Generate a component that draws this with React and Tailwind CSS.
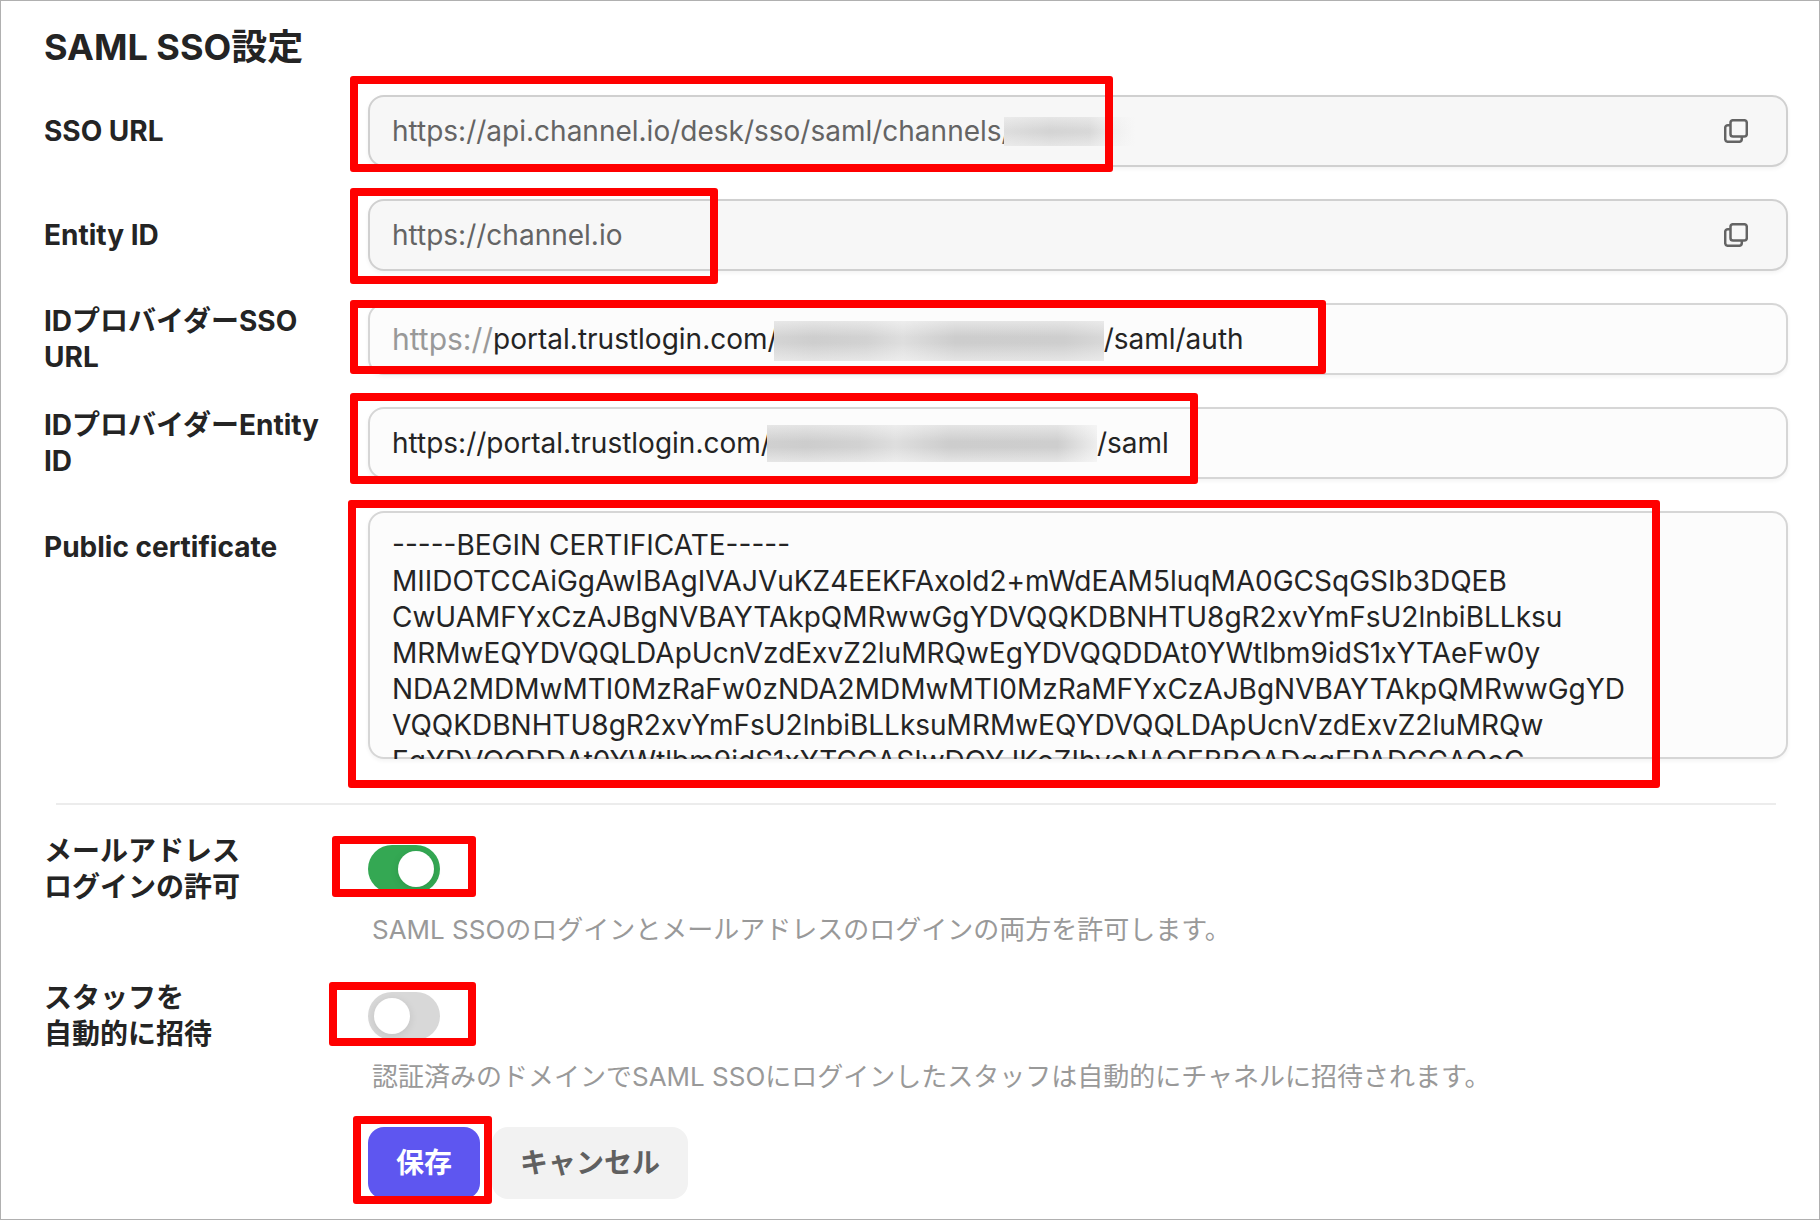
import { useState } from 'react'
import clsx from 'clsx'

const CERTIFICATE = [
  '-----BEGIN CERTIFICATE-----',
  'MIIDOTCCAiGgAwIBAgIVAJVuKZ4EEKFAxold2+mWdEAM5luqMA0GCSqGSIb3DQEB',
  'CwUAMFYxCzAJBgNVBAYTAkpQMRwwGgYDVQQKDBNHTU8gR2xvYmFsU2lnbiBLLksu',
  'MRMwEQYDVQQLDApUcnVzdExvZ2luMRQwEgYDVQQDDAt0YWtlbm9idS1xYTAeFw0y',
  'NDA2MDMwMTI0MzRaFw0zNDA2MDMwMTI0MzRaMFYxCzAJBgNVBAYTAkpQMRwwGgYD',
  'VQQKDBNHTU8gR2xvYmFsU2lnbiBLLksuMRMwEQYDVQQLDApUcnVzdExvZ2luMRQw',
  'EgYDVQQDDAt0YWtlbm9idS1xYTCCASIwDQYJKoZIhvcNAQEBBQADggEPADCCAQoC',
].join('\n')

export default function App() {
  const [idpUrl, setIdpUrl] = useState('portal.trustlogin.com/')
  const [idpEntity, setIdpEntity] = useState('https://portal.trustlogin.com/')
  const [certificate, setCertificate] = useState(CERTIFICATE)
  const [allowEmail, setAllowEmail] = useState(true)
  const [autoInvite, setAutoInvite] = useState(false)

  return (
    <main
      lang="ja"
      className="border border-[#b0b0b0] bg-white pl-[43px] pr-[31px] pt-[22px] pb-5 font-['Inter','Noto_Sans_CJK_JP',sans-serif] text-[28px] leading-9 text-[#242424]"
    >
      <h1 className="mb-6 text-4xl leading-12 font-bold">SAML SSO設定</h1>

      <form onSubmit={e => e.preventDefault()}>
        <div className="space-y-8">
          <Row label="SSO URL" htmlFor="sso-url">
            <Field readOnly>
              <input
                id="sso-url"
                readOnly
                value="https://api.channel.io/desk/sso/saml/channels/"
                className="field-sizing-content text-[#646464] outline-none"
              />
              <Mask className="-ml-2 h-[29px] w-[131px] bg-[linear-gradient(#f7f7f780,transparent_45%,transparent_55%,#f7f7f780),linear-gradient(90deg,#dedede,#d4d4d4_35%,#d8d8d8_65%,#f0f0f0_85%,#f7f7f7)]" />
              <CopyButton />
            </Field>
            <Highlight className="-left-[18px] -top-[19px] h-24 w-[763px]" />
          </Row>

          <Row label="Entity ID" htmlFor="entity-id">
            <Field readOnly>
              <input
                id="entity-id"
                readOnly
                value="https://channel.io"
                className="min-w-0 grow text-[#646464] outline-none"
              />
              <CopyButton />
            </Field>
            <Highlight className="-left-[18px] -top-[11px] h-24 w-[368px]" />
          </Row>

          <Row label="IDプロバイダーSSO URL" htmlFor="idp-sso-url">
            <Field>
              <span className="text-3xl leading-9 text-[#999]">https://</span>
              <input
                id="idp-sso-url"
                value={idpUrl}
                onChange={e => setIdpUrl(e.target.value)}
                className="field-sizing-content outline-none"
              />
              <Mask className="mt-1 -ml-1 h-10 w-[330px] bg-[linear-gradient(#fcfcfc80,transparent_40%,transparent_55%,#fcfcfc80),linear-gradient(90deg,#d4d4d4,#cecece_12%,#d2d2d2_28%,#dedede_39%,#cdcdcd_55%,#cecece_88%,#d8d8d8)]" />
              <span>/saml/auth</span>
            </Field>
            <Highlight className="-left-[18px] -top-[3px] h-[74px] w-[976px]" />
          </Row>

          <Row label="IDプロバイダーEntity ID" htmlFor="idp-entity-id">
            <Field>
              <input
                id="idp-entity-id"
                value={idpEntity}
                onChange={e => setIdpEntity(e.target.value)}
                className="field-sizing-content outline-none"
              />
              <Mask className="-ml-1 h-[37px] w-[330px] bg-[linear-gradient(#fcfcfc80,transparent_45%,transparent_60%,#fcfcfc80),linear-gradient(90deg,#d0d0d0,#cdcdcd_12%,#d2d2d2_28%,#dedede_39%,#cdcdcd_55%,#cecece_88%,#eeeeee)]" />
              <span>/saml</span>
            </Field>
            <Highlight className="-left-[18px] -top-[14px] h-[91px] w-[848px]" />
          </Row>

          <Row label="Public certificate" htmlFor="certificate">
            <textarea
              id="certificate"
              value={certificate}
              onChange={e => setCertificate(e.target.value)}
              spellCheck={false}
              className="block h-[248px] w-full resize-none overflow-hidden rounded-2xl bg-[#fcfcfc] px-6 pt-4 shadow-[inset_0_0_0_2px_#d6d6d6,0_2px_4px_#0000000d] outline-none"
            />
            <Highlight className="-left-5 -top-[11px] h-72 w-[1312px]" />
          </Row>
        </div>

        <hr className="mt-11 mr-3 mb-7 ml-3 border-t-2 border-[#ececec]" />

        <ToggleRow
          id="allow-email"
          label={<>メールアドレス<br />ログインの許可</>}
          help="SAML SSOのログインとメールアドレスのログインの両方を許可します。"
          checked={allowEmail}
          onChange={setAllowEmail}
          highlight="-left-9 -top-[9px] h-[61px] w-36"
        />
        <ToggleRow
          id="auto-invite"
          label={<>スタッフを<br />自動的に招待</>}
          help="認証済みのドメインでSAML SSOにログインしたスタッフは自動的にチャネルに招待されます。"
          checked={autoInvite}
          onChange={setAutoInvite}
          highlight="-left-[39px] -top-[10px] h-16 w-[147px]"
        />

        <div className="ml-[324px] flex gap-3 font-bold">
          <div className="relative">
            <button type="submit" className="h-18 rounded-2xl bg-[#5e56f0] px-7 text-white">
              保存
            </button>
            <Highlight className="-left-[15px] -top-[11px] h-[88px] w-[139px]" />
          </div>
          <button type="button" className="h-18 rounded-2xl bg-[#f2f2f2] px-7 text-[#606060]">
            キャンセル
          </button>
        </div>
      </form>
    </main>
  )
}

function Row({ label, htmlFor, children }) {
  return (
    <div className="flex items-start">
      <label htmlFor={htmlFor} className="flex min-h-18 w-[324px] shrink-0 items-center pr-8 font-bold">
        {label}
      </label>
      <div className="relative min-w-0 grow">{children}</div>
    </div>
  )
}

function Field({ readOnly, children }) {
  return (
    <div
      className={clsx(
        'flex h-18 items-center rounded-2xl border-2 px-[22px] shadow-[0_2px_4px_#0000000d]',
        readOnly ? 'border-[#d0d0d0] bg-[#f7f7f7]' : 'border-[#d6d6d6] bg-[#fcfcfc]'
      )}
    >
      {children}
    </div>
  )
}

function ToggleRow({ id, label, help, checked, onChange, highlight }) {
  return (
    <div className="flex items-start pb-[33px]">
      <label htmlFor={id} className="w-[324px] shrink-0 font-bold">{label}</label>
      <div className="min-w-0 grow pt-3">
        <div className="relative h-12">
          <input
            id={id}
            type="checkbox"
            role="switch"
            checked={checked}
            onChange={e => onChange(e.target.checked)}
            className="block h-12 w-18 appearance-none rounded-full bg-[#d8d8d8] p-1.5 before:block before:size-9 before:rounded-full before:bg-white before:shadow-[0_2px_8px_#0000001a] checked:bg-[#34a853] checked:before:ml-6"
          />
          <Highlight className={highlight} />
        </div>
        <p className="mt-5 ml-1 text-[26px] leading-[34px] text-[#999]">{help}</p>
      </div>
    </div>
  )
}

// Covers the tenant specific part of a URL
function Mask({ className }) {
  return <span aria-hidden="true" className={clsx('z-10 shrink-0', className)} />
}

function CopyButton() {
  return (
    <button type="button" aria-label="コピー" className="ml-auto shrink-0 p-4 text-[#646464]">
      <svg viewBox="0 0 24 24" className="size-6" fill="none" stroke="currentColor" strokeWidth="2.5">
        <rect x="6.5" y="1.2" width="16.3" height="16.3" rx="2.6" />
        <path d="M6.5 6.2H4A2.7 2.7 0 0 0 1.2 8.9V20A2.8 2.8 0 0 0 4 22.8h11a2.8 2.8 0 0 0 2.8-2.8v-2.5" />
      </svg>
    </button>
  )
}

function Highlight({ className }) {
  return (
    <span
      aria-hidden="true"
      className={clsx('pointer-events-none absolute z-20 rounded-[3px] border-8 border-[#ff0000]', className)}
    />
  )
}
